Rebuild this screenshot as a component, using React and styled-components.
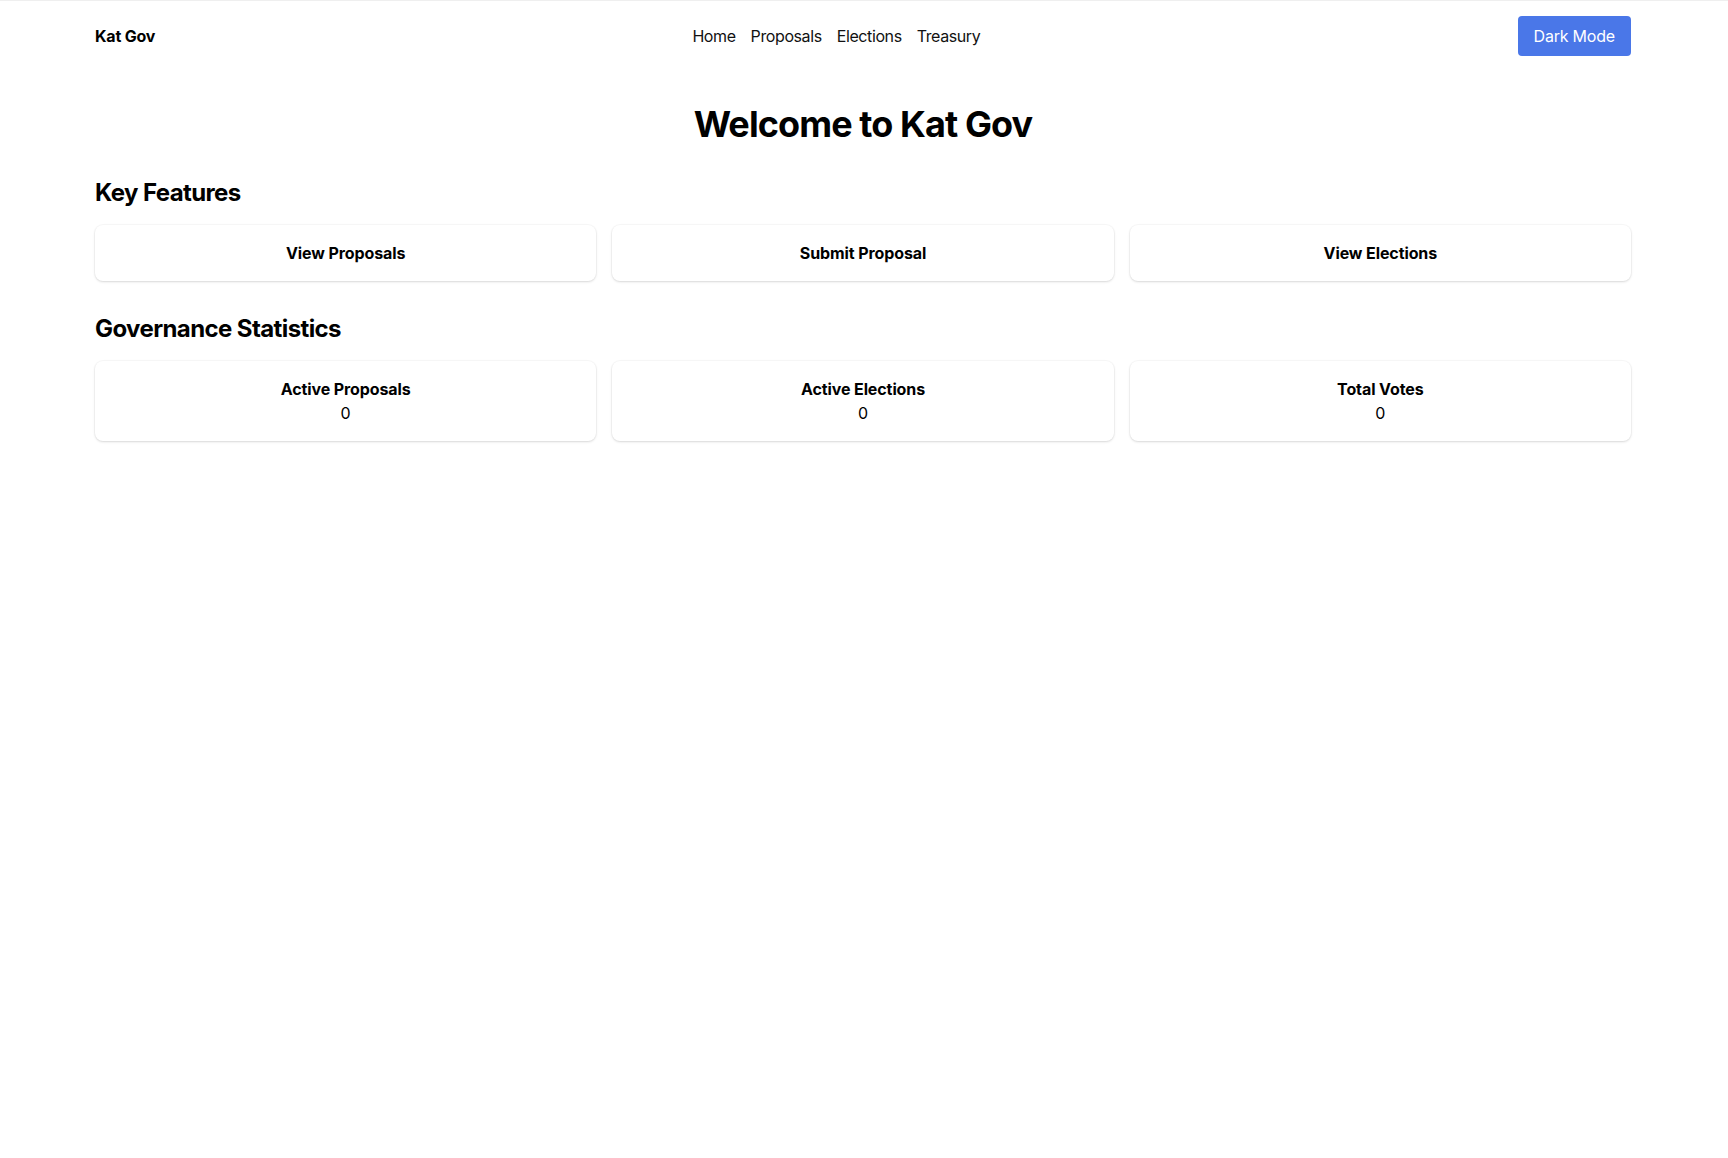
import React from "react";
import styled, { createGlobalStyle } from "styled-components";

const Global = createGlobalStyle`
  * { box-sizing: border-box; }
  html, body { margin: 0; padding: 0; background: #ffffff; }
  body {
    font-family: Inter, "Noto Sans", "Liberation Sans", sans-serif;
    color: #000;
    font-size: 16px;
    line-height: 24px;
    border-top: 1px solid #efefef;
  }
`;

const Container = styled.div`
  max-width: 1536px;
  margin: 0 auto;
  transform: translateX(-1px);
`;

const Header = styled.header`
  display: flex;
  align-items: center;
  justify-content: space-between;
  padding: 15px 0 16px;
`;

const Logo = styled.div`
  font-weight: 700;
  font-size: 16px;
  letter-spacing: -0.2px;
`;

const Nav = styled.nav`
  display: flex;
  gap: 15px;
`;

const NavLink = styled.a`
  color: #111;
  text-decoration: none;
  font-size: 16px;
  letter-spacing: -0.4px;
  cursor: pointer;
`;

const ModeButton = styled.button`
  font-family: inherit;
  font-size: 16px;
  line-height: 24px;
  letter-spacing: -0.2px;
  padding: 8px 16px;
  border: none;
  border-radius: 4px;
  background: #4a77e8;
  color: #fff;
  cursor: pointer;
`;

const Main = styled.main`
  padding-top: 32px;
`;

const Title = styled.h1`
  margin: 0 0 33px;
  text-align: center;
  font-size: 36px;
  line-height: 40px;
  font-weight: 700;
  letter-spacing: -0.025em;
`;

const Section = styled.section`
  margin-bottom: 32px;
`;

const SectionTitle = styled.h2`
  margin: 0 0 16px;
  font-size: 24px;
  line-height: 32px;
  font-weight: 700;
  letter-spacing: -0.025em;
`;

const Grid = styled.div`
  display: grid;
  grid-template-columns: repeat(3, 1fr);
  gap: 16px;
`;

const Card = styled.div`
  background: #fff;
  border-radius: 8px;
  padding: 16px;
  text-align: center;
  box-shadow: 0 0 0 1px rgba(0, 0, 0, 0.025), 0 1px 3px rgba(0, 0, 0, 0.1),
    0 1px 2px rgba(0, 0, 0, 0.04);
`;

const CardTitle = styled.div`
  font-weight: 700;
  font-size: 16px;
  line-height: 24px;
  letter-spacing: -0.1px;
`;

const CardValue = styled.div`
  font-size: 16px;
  line-height: 24px;
`;

const features = ["View Proposals", "Submit Proposal", "View Elections"];
const stats = [
  { label: "Active Proposals", value: 0 },
  { label: "Active Elections", value: 0 },
  { label: "Total Votes", value: 0 },
];

export default function App() {
  return (
    <>
      <Global />
      <Container>
        <Header>
          <Logo>Kat Gov</Logo>
          <Nav>
            <NavLink>Home</NavLink>
            <NavLink>Proposals</NavLink>
            <NavLink>Elections</NavLink>
            <NavLink>Treasury</NavLink>
          </Nav>
          <ModeButton>Dark Mode</ModeButton>
        </Header>
        <Main>
          <Title>Welcome to Kat Gov</Title>
          <Section>
            <SectionTitle>Key Features</SectionTitle>
            <Grid>
              {features.map((f) => (
                <Card key={f}>
                  <CardTitle>{f}</CardTitle>
                </Card>
              ))}
            </Grid>
          </Section>
          <Section>
            <SectionTitle>Governance Statistics</SectionTitle>
            <Grid>
              {stats.map((s) => (
                <Card key={s.label}>
                  <CardTitle>{s.label}</CardTitle>
                  <CardValue>{s.value}</CardValue>
                </Card>
              ))}
            </Grid>
          </Section>
        </Main>
      </Container>
    </>
  );
}
